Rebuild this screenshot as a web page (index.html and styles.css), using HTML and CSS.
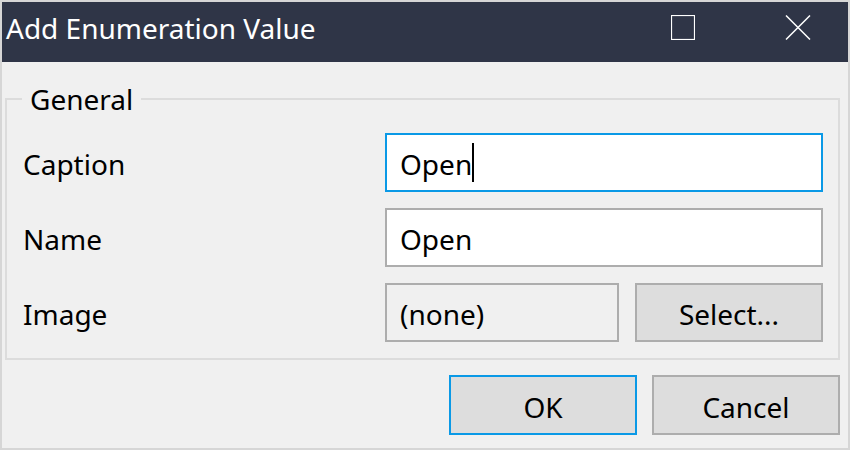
FILE: index.html
```html
<!DOCTYPE html>
<html>
<head>
<meta charset="utf-8">
<link rel="stylesheet" href="styles.css">
</head>
<body>
<div class="window">
  <div class="titlebar">
    <div class="title">Add Enumeration Value</div>
    <div class="controls">
      <svg class="ctl" width="24" height="25" viewBox="0 0 24 25"><rect x="0.5" y="0.5" width="23" height="24" fill="none" stroke="#fff" stroke-width="1.2"/></svg>
      <svg class="ctl" width="26" height="25" viewBox="0 0 26 25"><path d="M1 0.5 L25 24.5 M25 0.5 L1 24.5" stroke="#fff" stroke-width="1.5" fill="none"/></svg>
    </div>
  </div>
  <div class="body">
    <fieldset class="group">
      <legend class="legend">General</legend>
      <div class="fields">
        <div class="label">Caption</div>
        <div class="field focus"><span>Open</span><span class="caret"></span></div>
        <div class="label">Name</div>
        <div class="field"><span>Open</span></div>
        <div class="label">Image</div>
        <div class="image-row">
          <div class="field readonly"><span>(none)</span></div>
          <div class="btn">Select...</div>
        </div>
      </div>
    </fieldset>
    <div class="actions">
      <div class="btn dlg default">OK</div>
      <div class="btn dlg">Cancel</div>
    </div>
  </div>
</div>
</body>
</html>
```
FILE: styles.css
```css
html, body {
  margin: 0;
  padding: 0;
}
body {
  font-family: "Noto Sans", sans-serif;
  font-size: 28px;
  color: #000;
  background: #f0f0f0;
}
.window {
  width: 850px;
  height: 450px;
  box-sizing: border-box;
  border: 2px solid #d6d6d6;
  background: #f0f0f0;
  display: flex;
  flex-direction: column;
}
.titlebar {
  height: 60px;
  box-sizing: border-box;
  background: #2f3547;
  color: #fff;
  display: flex;
  align-items: center;
  padding: 0 37px 9px 4px;
}
.title {
  flex: 1;
  line-height: 38px;
  white-space: nowrap;
}
.controls {
  display: flex;
  align-items: center;
  gap: 90px;
}
.ctl {
  display: block;
}
.body {
  flex: 1;
  display: flex;
  flex-direction: column;
}
.group {
  margin: 18px 8px 0 3px;
  padding: 0;
  border: 2px solid #dcdcdc;
  min-width: 0;
}
.legend {
  margin-left: 15px;
  padding: 0 8px;
  line-height: 38px;
}
.fields {
  display: grid;
  grid-template-columns: 1fr 438px;
  row-gap: 16px;
  padding: 15px 15px 16px 16px;
}
.label {
  display: flex;
  align-items: center;
  padding-top: 3px;
  line-height: 38px;
}
.field {
  height: 59px;
  box-sizing: border-box;
  border: 2px solid #adadad;
  background: #fff;
  display: flex;
  align-items: center;
  padding: 3px 0 0 13px;
  line-height: 38px;
}
.field.focus {
  border-color: #0a99e6;
}
.field.readonly {
  background: #f0f0f0;
}
.caret {
  display: inline-block;
  width: 1.5px;
  height: 39px;
  background: #000;
  margin-top: -3px;
}
.image-row {
  display: grid;
  grid-template-columns: 1fr 188px;
  gap: 16px;
}
.btn {
  height: 59px;
  box-sizing: border-box;
  border: 2px solid #adadad;
  background: #dddddd;
  display: flex;
  align-items: center;
  justify-content: center;
  padding-top: 3px;
  line-height: 38px;
}
.actions {
  display: flex;
  justify-content: flex-end;
  gap: 15px;
  padding: 15px 8px 0 0;
}
.btn.dlg {
  width: 188px;
  height: 60px;
}
.btn.default {
  border-color: #0a99e6;
}
```
